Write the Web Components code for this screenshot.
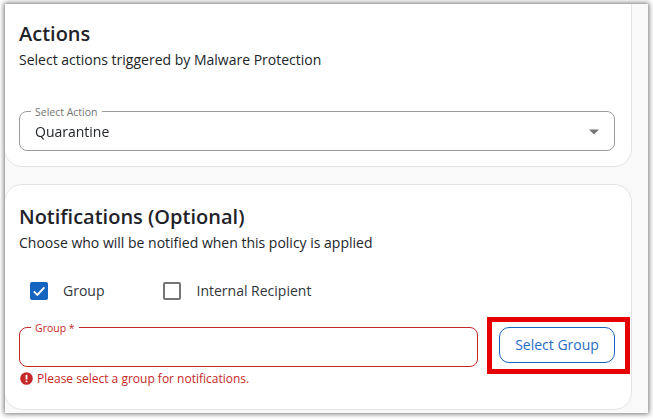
<!DOCTYPE html>
<html lang="en"><head><meta charset="utf-8"><title>Policy</title>
<style>
html,body{margin:0;padding:0;background:#fff;height:100%;overflow:hidden}
body{font-family:"Open Sans",sans-serif;color:#212529}
</style></head><body>
<app-frame>
  <app-card style="--h:179px;--t:-16px;--pt:31px" heading="Actions" sub="Select actions triggered by Malware Protection" subgap="42px">
    <outline-field label="Select Action" value="Quarantine" select></outline-field>
  </app-card>
  <app-card style="--h:226px;--t:17px;--pt:18px" heading="Notifications (Optional)" sub="Choose who will be notified when this policy is applied" subgap="30px">
    <check-row>
      <check-box checked>Group</check-box>
      <check-box>Internal Recipient</check-box>
    </check-row>
    <group-row>
      <outline-field label="Group *" error="Please select a group for notifications."></outline-field>
      <outline-button>Select Group</outline-button>
    </group-row>
  </app-card>
</app-frame>
<script>
function def(name, html, init){
  customElements.define(name, class extends HTMLElement{
    connectedCallback(){
      if(this.shadowRoot) return;
      const r=this.attachShadow({mode:'open'});
      r.innerHTML=html;
      if(init) init.call(this,r);
    }
  });
}
def('app-frame',`<style>
:host{display:block;position:fixed;inset:4px 5px 6px 5px;background:#f9f9f9;overflow:hidden;box-shadow:0 0 5px 1px rgba(0,0,0,.55)}
.wrap{display:flex;flex-direction:column;width:627px;margin-left:0}
</style><div class="wrap"><slot></slot></div>`);
def('app-card',`<style>
:host{display:block;box-sizing:border-box;height:var(--h);margin:var(--t) 0 0 -1px;background:#fff;border:1px solid #e4e4e4;border-radius:18px;padding:calc(var(--pt,35px)) 16px 0 14px}
h2{margin:0;font:600 20px/27px "Open Sans",sans-serif;color:#1f2329}
p{margin:3px 0 0;font:400 14px/19px "Open Sans",sans-serif;color:#212529}
</style><h2></h2><p></p><div id="g"></div><slot></slot>`,function(r){
  r.querySelector('h2').textContent=this.getAttribute('heading');
  r.querySelector('p').textContent=this.getAttribute('sub');
  r.querySelector('#g').style.height=this.getAttribute('subgap');
});
def('outline-field',`<style>
:host{display:block;flex:1;min-width:0;position:relative}
.box{box-sizing:border-box;height:40px;border:1px solid var(--c,#9b9b9b);border-radius:8px;display:flex;align-items:center;padding:1px 14px 0 15px;font:400 14px/19px "Open Sans",sans-serif;color:#212529}
.v{flex:1}
.label{position:absolute;left:12px;top:-6px;padding:0 4px;background:#fff;font:400 10.5px/14px "Open Sans",sans-serif;color:var(--l,#757575)}
.err{display:flex;align-items:center;gap:4px;margin:4px 0 0 1px;font:400 12px/15px "Open Sans",sans-serif;color:#c62828}
svg{display:block}
</style><div class="box"><span class="v"></span></div><span class="label"></span>`,function(r){
  r.querySelector('.label').textContent=this.getAttribute('label');
  r.querySelector('.v').textContent=this.getAttribute('value')||'';
  if(this.hasAttribute('select')){
    r.querySelector('.box').insertAdjacentHTML('beforeend','<svg width="12" height="6" viewBox="0 0 12 6"><path d="M1 0.5h10L6 5.5z" fill="#757575"/></svg>');
  }
  const e=this.getAttribute('error');
  if(e){
    this.style.setProperty('--c','#c62828');this.style.setProperty('--l','#c62828');
    const d=document.createElement('div');d.className='err';
    d.innerHTML='<svg width="13" height="13" viewBox="0 0 13 13"><circle cx="6.5" cy="6.5" r="6.3" fill="#c62828"/><rect x="5.6" y="2.8" width="1.8" height="4.8" rx=".6" fill="#fff"/><rect x="5.6" y="8.5" width="1.8" height="1.8" rx=".6" fill="#fff"/></svg><span></span>';
    d.querySelector('span').textContent=e;
    r.appendChild(d);
  }
});
def('check-row',`<style>
:host{display:flex;gap:59px;padding-left:11px;height:18px;margin-bottom:27px}
</style><slot></slot>`);
def('check-box',`<style>
:host{display:flex;align-items:center;gap:15px;font:400 14px/18px "Open Sans",sans-serif;color:#30363b}
.b{box-sizing:border-box;width:18px;height:18px;border:2px solid #757575;border-radius:2px;display:block}
:host([checked]) .b{background:#1565c0;border-color:#1565c0}
svg{display:block}
</style><span class="b"></span><slot></slot>`,function(r){
  if(this.hasAttribute('checked')) r.querySelector('.b').innerHTML='<svg width="14" height="14" viewBox="0 0 14 14"><path d="M1.8 7.4l3.6 3.5 7-7.6" fill="none" stroke="#fff" stroke-width="1.9"/></svg>';
});
def('group-row',`<style>
:host{display:flex;gap:21px;align-items:flex-start}
</style><slot></slot>`);
def('outline-button',`<style>
:host{display:block;position:relative;flex:none;width:116px}
button{box-sizing:border-box;display:block;width:116px;height:36px;padding:0 0 1px;background:#fff;border:1px solid #1565c0;border-radius:10px;color:#1f6cc4;font:400 14px/19px "Open Sans",sans-serif}
.hl{position:absolute;left:-12px;top:-10px;width:143px;height:57px;box-sizing:border-box;border:5px solid #e60000;pointer-events:none}
</style><button type="button"><slot></slot></button><span class="hl"></span>`);
</script>
</body></html>
